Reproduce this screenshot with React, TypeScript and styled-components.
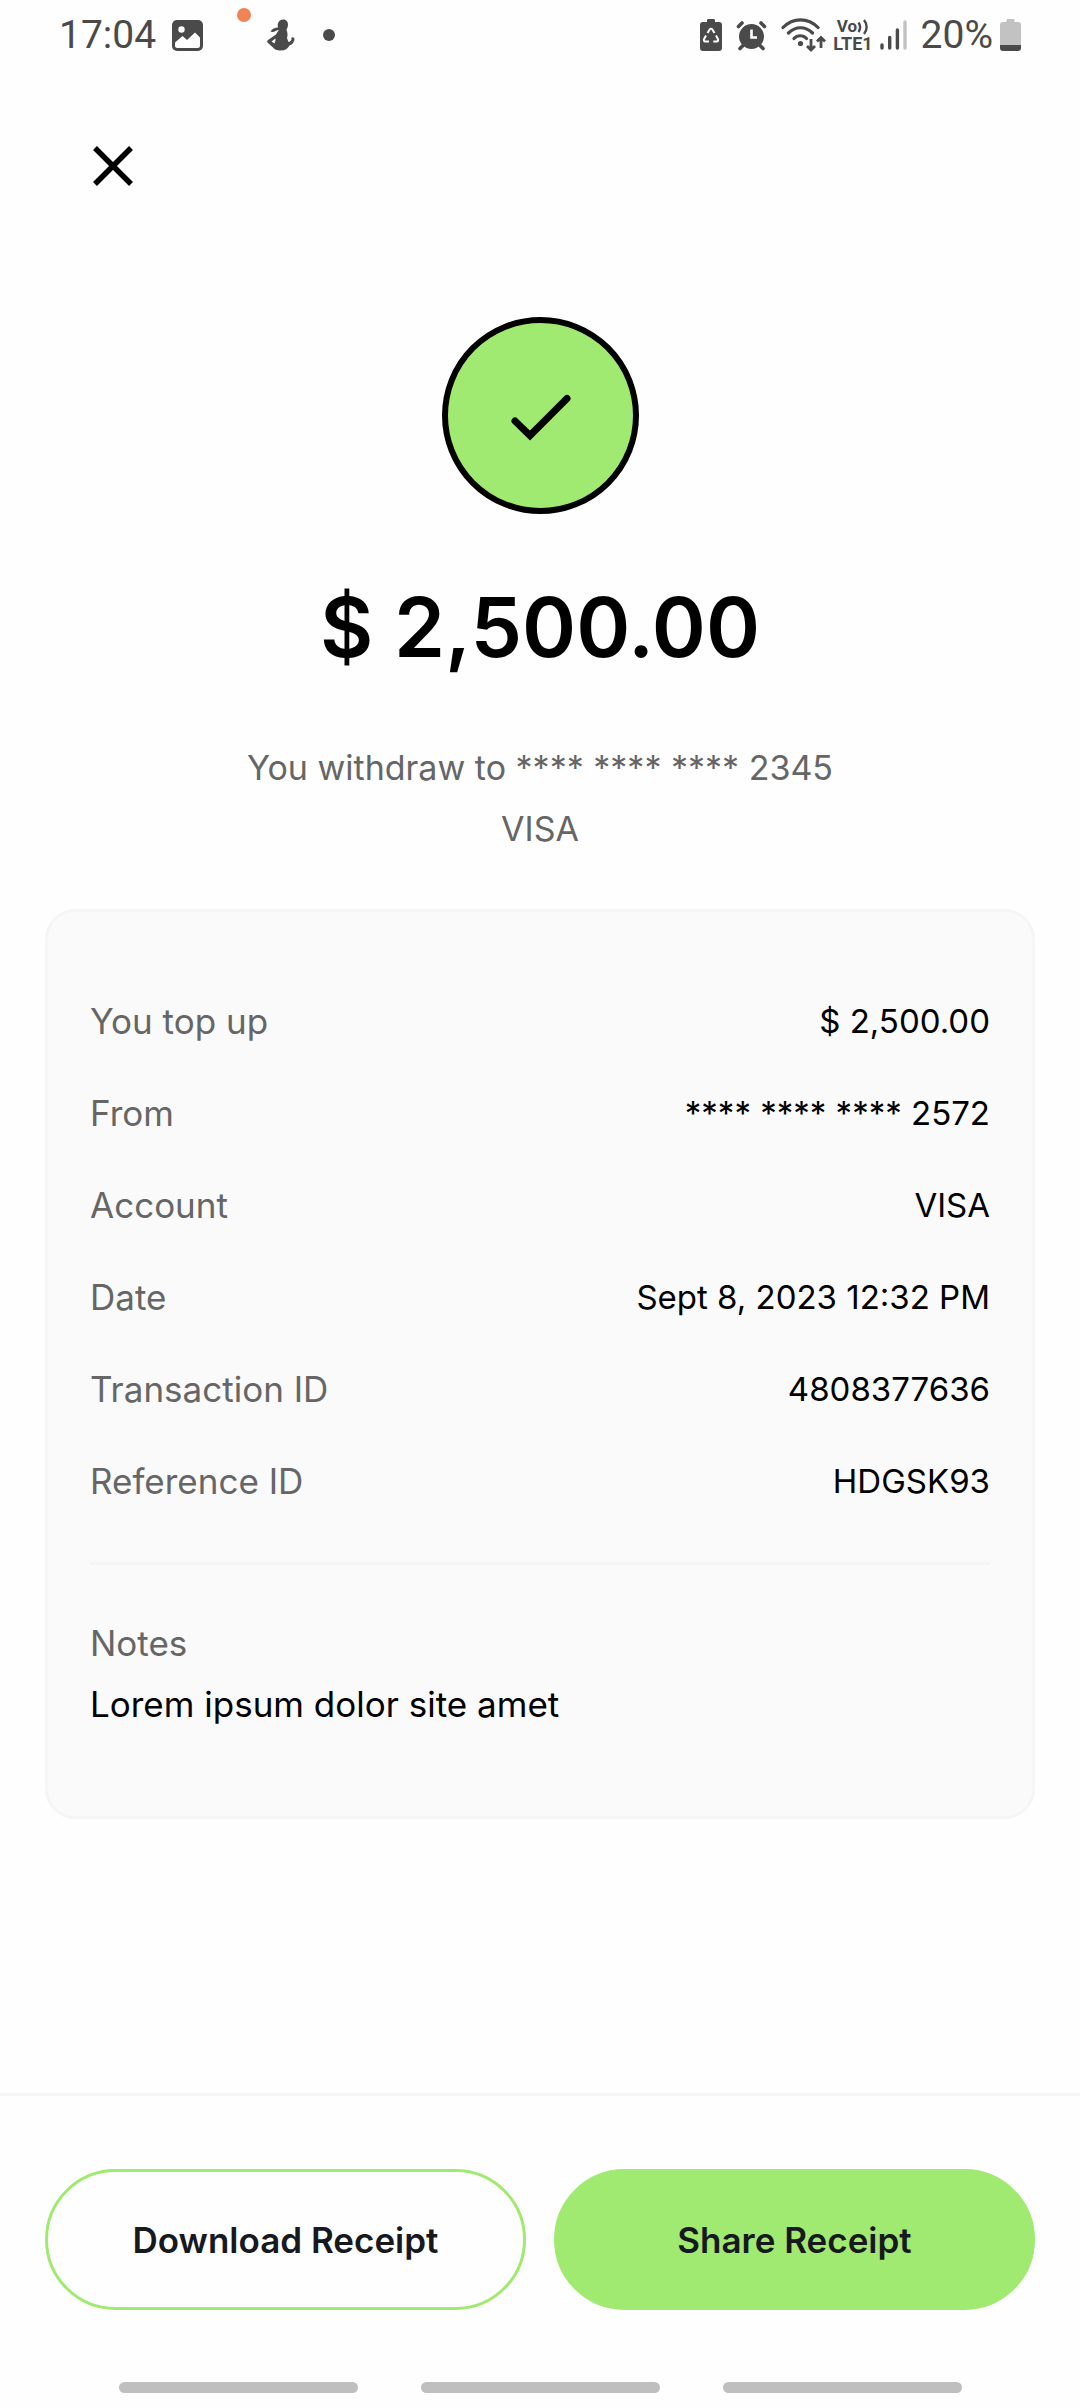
import React from "react";
import styled, { createGlobalStyle } from "styled-components";

const ink = "#4a4a4a";
const green = "#a1ea71";
const hairline = "#f5f5f5";

const GlobalStyle = createGlobalStyle`
  *, *::before, *::after { box-sizing: border-box; }
  body {
    margin: 0;
    background: #fefefe;
    color: #000;
    font-family: Inter, "Open Sans", sans-serif;
  }
`;

const Screen = styled.div`
  display: flex;
  flex-direction: column;
  min-height: 100vh;
`;

const StatusBar = styled.div`
  display: flex;
  justify-content: space-between;
  height: 70px;
  padding: 0 59px;
  font-family: Roboto, sans-serif;
  color: ${ink};
`;

const StatusGroup = styled.div<{ $gap: number }>`
  display: flex;
  align-items: center;
  gap: ${({ $gap }) => $gap}px;
  height: 70px;

  svg { display: block; flex: none; }
`;

const StatusText = styled.span`
  font-size: 39px;
  line-height: 70px;
`;

const Dot = styled.span<{ $size: number; $color: string; $raised?: boolean }>`
  width: ${({ $size }) => $size}px;
  height: ${({ $size }) => $size}px;
  border-radius: 50%;
  background: ${({ $color }) => $color};
  align-self: ${({ $raised }) => ($raised ? "flex-start" : "center")};
  margin: ${({ $raised }) => ($raised ? "8px 0 0 18px" : "0 0 0 12px")};
`;

const Network = styled.span`
  display: flex;
  flex-direction: column;
  align-items: center;
  font-size: 18px;
  font-weight: 700;
  line-height: 17px;
`;

const VoiceLine = styled.span`
  display: flex;
  align-items: center;
  font-size: 17px;
`;

const Header = styled.header`
  display: flex;
  padding: 66px 83px 0;
`;

const CloseButton = styled.button`
  display: block;
  width: 60px;
  height: 60px;
  padding: 0;
  border: 0;
  background: none;
  cursor: pointer;

  svg { display: block; }
`;

const Main = styled.main`
  flex: 1;
  display: flex;
  flex-direction: column;
  align-items: center;
  padding: 121px 45px 48px;
`;

const SuccessBadge = styled.div`
  display: grid;
  place-items: center;
  width: 197px;
  height: 197px;
  border: 6px solid #000;
  border-radius: 50%;
  background: ${green};
`;

const Amount = styled.h1`
  margin: 54px 0 49px;
  font-size: 82px;
  line-height: 120px;
  font-weight: 600;
`;

const Summary = styled.p`
  max-width: 640px;
  margin: 0 0 50px;
  font-size: 34px;
  line-height: 61px;
  text-align: center;
  color: #666;
`;

const Card = styled.section`
  width: 100%;
  padding: 79px 42px 81px;
  border: 3px solid ${hairline};
  border-radius: 30px;
  background: #fafafa;
  font-size: 35px;
  line-height: 61px;
`;

const Details = styled.dl`
  display: flex;
  flex-direction: column;
  gap: 31px;
  margin: 0;
  padding-bottom: 50px;
  border-bottom: 3px solid ${hairline};
`;

const DetailRow = styled.div`
  display: flex;
  justify-content: space-between;
  gap: 24px;
`;

const Label = styled.dt`
  color: #666;
`;

const Value = styled.dd`
  margin: 0;
  font-size: 33px;
  text-align: right;
`;

const Notes = styled.dl`
  margin: 0;
  padding-top: 48px;
`;

const NoteText = styled.dd`
  margin: 0;
`;

const Footer = styled.footer`
  display: flex;
  gap: 28px;
  padding: 73px 45px 72px;
  border-top: 3px solid ${hairline};
`;

const ActionButton = styled.button<{ $filled?: boolean }>`
  flex: 1 1 0;
  height: 141px;
  border: 3px solid ${green};
  border-radius: 71px;
  background: ${({ $filled }) => ($filled ? green : "transparent")};
  color: #17191f;
  font-family: inherit;
  font-size: 35px;
  font-weight: 600;
  cursor: pointer;
`;

const GestureBar = styled.div`
  display: flex;
  justify-content: center;
  gap: 63px;
  padding-bottom: 15px;
`;

const GestureHint = styled.span`
  width: 239px;
  height: 11px;
  border-radius: 6px;
  background: #bfbfbf;
`;

const PictureIcon = () => (
  <svg width="31" height="31" viewBox="0 0 31 31" aria-hidden="true">
    <rect width="31" height="31" rx="5" fill={ink} />
    <circle cx="9.5" cy="9.5" r="3.2" fill="#fff" />
    <path d="M3 22.5l7.500-6.500 4.500 4 8-7.500L28 17.500v8a2.500 2.500 0 0 1-2.500 2.500h-20A2.500 2.500 0 0 1 3 25.500z" fill="#fff" />
  </svg>
);

const FigureIcon = () => (
  <svg width="28" height="32" viewBox="0 0 28 32" aria-hidden="true">
    <path
      d="M16 .5c3 0 5 2 5 5 0 2.500-1 4-1.500 5.500 1 2 1.500 5 .5 8l1.500 4c2-.5 3.500-2 3-4.500 1.500-.5 3 .5 3 1.500-.5 4-2.500 5.500-5 6.500-1.500 3-4.500 5-9 5-4 0-6-1-7.500-3L.5 23.500c-.5-1-.3-2 .5-2.500l8-5.500c1-2 2-3.500 3-4.500-3 .2-5.500 3-8.500 1.500C5 10 8 8.500 11 8.500c-1-4 1-8 5-8z"
      fill={ink}
    />
    <path d="M4.500 22.500l4-3c.3 2-.5 3.500-1 5z" fill="#fff" />
  </svg>
);

const RecycleBatteryIcon = () => (
  <svg width="22" height="32" viewBox="0 0 22 32" aria-hidden="true">
    <path d="M7 3V1.500C7 .7 7.500 0 8.300 0h5.400c.8 0 1.300.7 1.300 1.500V3h4a3 3 0 0 1 3 3v23a3 3 0 0 1-3 3H3a3 3 0 0 1-3-3V6a3 3 0 0 1 3-3z" fill={ink} />
    <path
      d="M7.500 14l2.300-3.700c.6-.9 1.800-.9 2.400 0L14.500 14M16 16.500l2 3.800c.5 1-.1 2.200-1.200 2.200h-3.500M9 22.500H5.200c-1.100 0-1.700-1.200-1.200-2.200l2-3.800"
      fill="none"
      stroke="#fff"
      strokeWidth="2"
    />
  </svg>
);

const AlarmIcon = () => (
  <svg width="31" height="31" viewBox="0 0 31 31" aria-hidden="true">
    <g fill="none" stroke={ink} strokeWidth="3.600" strokeLinecap="round">
      <path d="M2.500 6.500L6 3M28.500 6.500L25 3M6.500 26L4 28.500M24.500 26l2.500 2.500" />
    </g>
    <circle cx="15.500" cy="16.500" r="12.500" fill={ink} />
    <path d="M15.500 9.500v8h5.500" fill="none" stroke="#fff" strokeWidth="2.600" />
  </svg>
);

const WifiIcon = () => (
  <svg width="45" height="34" viewBox="0 0 45 34" aria-hidden="true">
    <g fill="none" stroke={ink} strokeWidth="3.200" strokeLinecap="round">
      <path d="M2 9.500C12-.8 27-.8 37 9.500M7.500 15c7-7 17-7 24 0M13 20.500c3.500-3.700 9-3.700 12.500 0" />
    </g>
    <circle cx="19.500" cy="25.500" r="2.600" fill={ink} />
    <path d="M30 21v11M26 28l4 4 4-4M40 30V19.500M36 23.500l4-4 4 4" fill="none" stroke={ink} strokeWidth="2.800" />
  </svg>
);

const VoiceWavesIcon = () => (
  <svg width="12" height="16" viewBox="0 0 12 16" aria-hidden="true">
    <path d="M1.500 3.500c2 2.800 2 6.700 0 9.500M7 1c3.500 4.300 3.500 10 0 14" fill="none" stroke={ink} strokeWidth="2.400" />
  </svg>
);

const SignalIcon = () => (
  <svg width="27" height="30" viewBox="0 0 27 30" aria-hidden="true">
    <g strokeWidth="3.400" strokeLinecap="round">
      <path d="M2 25v3M9.700 17.500V28M17.400 10v18" stroke={ink} />
      <path d="M25 2v26" stroke="#c2c2c2" />
    </g>
  </svg>
);

const BatteryIcon = () => (
  <svg width="21" height="32" viewBox="0 0 21 32" aria-hidden="true">
    <path d="M6.500 3V1.500C6.500.7 7 0 7.800 0h5.400c.8 0 1.300.7 1.300 1.500V3H18a3 3 0 0 1 3 3v20H0V6a3 3 0 0 1 3-3z" fill="#c2c2c2" />
    <path d="M0 26h21v3a3 3 0 0 1-3 3H3a3 3 0 0 1-3-3z" fill={ink} />
  </svg>
);

const details: [string, string][] = [
  ["You top up", "$ 2,500.00"],
  ["From", "**** **** **** 2572"],
  ["Account", "VISA"],
  ["Date", "Sept 8, 2023 12:32 PM"],
  ["Transaction ID", "4808377636"],
  ["Reference ID", "HDGSK93"],
];

export default function App() {
  return (
    <Screen>
      <GlobalStyle />
      <StatusBar>
        <StatusGroup $gap={16}>
          <StatusText>17:04</StatusText>
          <PictureIcon />
          <Dot $size={14} $color="#f08256" $raised />
          <FigureIcon />
          <Dot $size={12} $color={ink} />
        </StatusGroup>
        <StatusGroup $gap={14}>
          <RecycleBatteryIcon />
          <AlarmIcon />
          <StatusGroup $gap={7}>
            <WifiIcon />
            <Network>
              <VoiceLine>
                Vo
                <VoiceWavesIcon />
              </VoiceLine>
              <span>LTE1</span>
            </Network>
            <SignalIcon />
          </StatusGroup>
          <StatusGroup $gap={7}>
            <StatusText>20%</StatusText>
            <BatteryIcon />
          </StatusGroup>
        </StatusGroup>
      </StatusBar>

      <Header>
        <CloseButton type="button" aria-label="Close">
          <svg width="60" height="60" viewBox="0 0 60 60" aria-hidden="true">
            <path d="M12 12l36 36M48 12L12 48" stroke="#000" strokeWidth="5.500" />
          </svg>
        </CloseButton>
      </Header>

      <Main>
        <SuccessBadge>
          <svg width="64" height="64" viewBox="0 0 64 64" aria-hidden="true">
            <path d="M7 37L22 51.500L59 14.500" fill="none" stroke="#000" strokeWidth="7" strokeLinecap="round" />
          </svg>
        </SuccessBadge>
        <Amount>$ 2,500.00</Amount>
        <Summary>You withdraw to **** **** **** 2345 VISA</Summary>

        <Card>
          <Details>
            {details.map(([label, value]) => (
              <DetailRow key={label}>
                <Label>{label}</Label>
                <Value>{value}</Value>
              </DetailRow>
            ))}
          </Details>
          <Notes>
            <Label>Notes</Label>
            <NoteText>Lorem ipsum dolor site amet</NoteText>
          </Notes>
        </Card>
      </Main>

      <Footer>
        <ActionButton type="button">Download Receipt</ActionButton>
        <ActionButton type="button" $filled>
          Share Receipt
        </ActionButton>
      </Footer>
      <GestureBar>
        <GestureHint />
        <GestureHint />
        <GestureHint />
      </GestureBar>
    </Screen>
  );
}
